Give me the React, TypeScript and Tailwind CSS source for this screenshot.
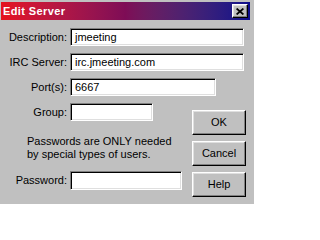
import React from "react";

const sunken =
  "bg-white border border-t-[#808080] border-l-[#808080] border-b-white border-r-white shadow-[inset_1px_1px_0_#000,inset_-1px_-1px_0_#dfdfdf] flex items-center pl-[4px] whitespace-nowrap overflow-hidden";

const raised =
  "bg-[#c0c0c0] border border-t-white border-l-white border-b-black border-r-black shadow-[inset_-1px_-1px_0_#808080,inset_1px_1px_0_#dfdfdf] flex items-center justify-center";

function Field({
  label,
  value,
  width,
  height = "h-[18px]",
}: {
  label: string;
  value?: string;
  width: string;
  height?: string;
}) {
  return (
    <div className="flex items-center">
      <span className="w-[66px] text-right">{label}</span>
      <div className={`${sunken} ${width} ${height} ml-[3px]`}>{value}</div>
    </div>
  );
}

function DialogButton({ label }: { label: string }) {
  return <button className={`${raised} w-[54px] h-[25px]`}>{label}</button>;
}

export default function App() {
  return (
    <div className="w-[254px] h-[204px] overflow-hidden bg-[#c0c0c0] pt-[2px] pl-[1px] pr-[4px] font-['Liberation_Sans',Arial,sans-serif] text-[11px] text-black">
      <div className="h-[18px] flex items-center justify-between pl-[2px] pr-[2px] bg-gradient-to-r from-[#e6121c] via-[#7e0c56] to-[#0c0c8c]">
        <span className="text-white font-bold tracking-[0.4px]">Edit Server</span>
        <div className={`${raised} w-[16px] h-[14px]`}>
          <svg width="8" height="7" viewBox="0 0 8 7">
            <path d="M0.6 0.5 L7.4 6.5 M7.4 0.5 L0.6 6.5" stroke="#000" strokeWidth="1.7" />
          </svg>
        </div>
      </div>

      <div className="pt-[8px] flex flex-col gap-[7px]">
        <Field label="Description:" value="jmeeting" width="w-[174px]" />
        <Field label="IRC Server:" value="irc.jmeeting.com" width="w-[174px]" />
        <Field label="Port(s):" value="6667" width="w-[146px]" />
      </div>

      <div className="flex mt-[7px]">
        <div className="w-[191px] flex flex-col">
          <Field label="Group:" width="w-[83px]" />
          <p className="mt-[14px] pl-[26px] leading-[13px]">
            Passwords are ONLY needed
            <br />
            by special types of users.
          </p>
          <div className="mt-[10px]">
            <Field label="Password:" width="w-[112px]" height="h-[19px]" />
          </div>
        </div>
        <div className="pt-[7px] flex flex-col gap-[6px]">
          <DialogButton label="OK" />
          <DialogButton label="Cancel" />
          <DialogButton label="Help" />
        </div>
      </div>
    </div>
  );
}
